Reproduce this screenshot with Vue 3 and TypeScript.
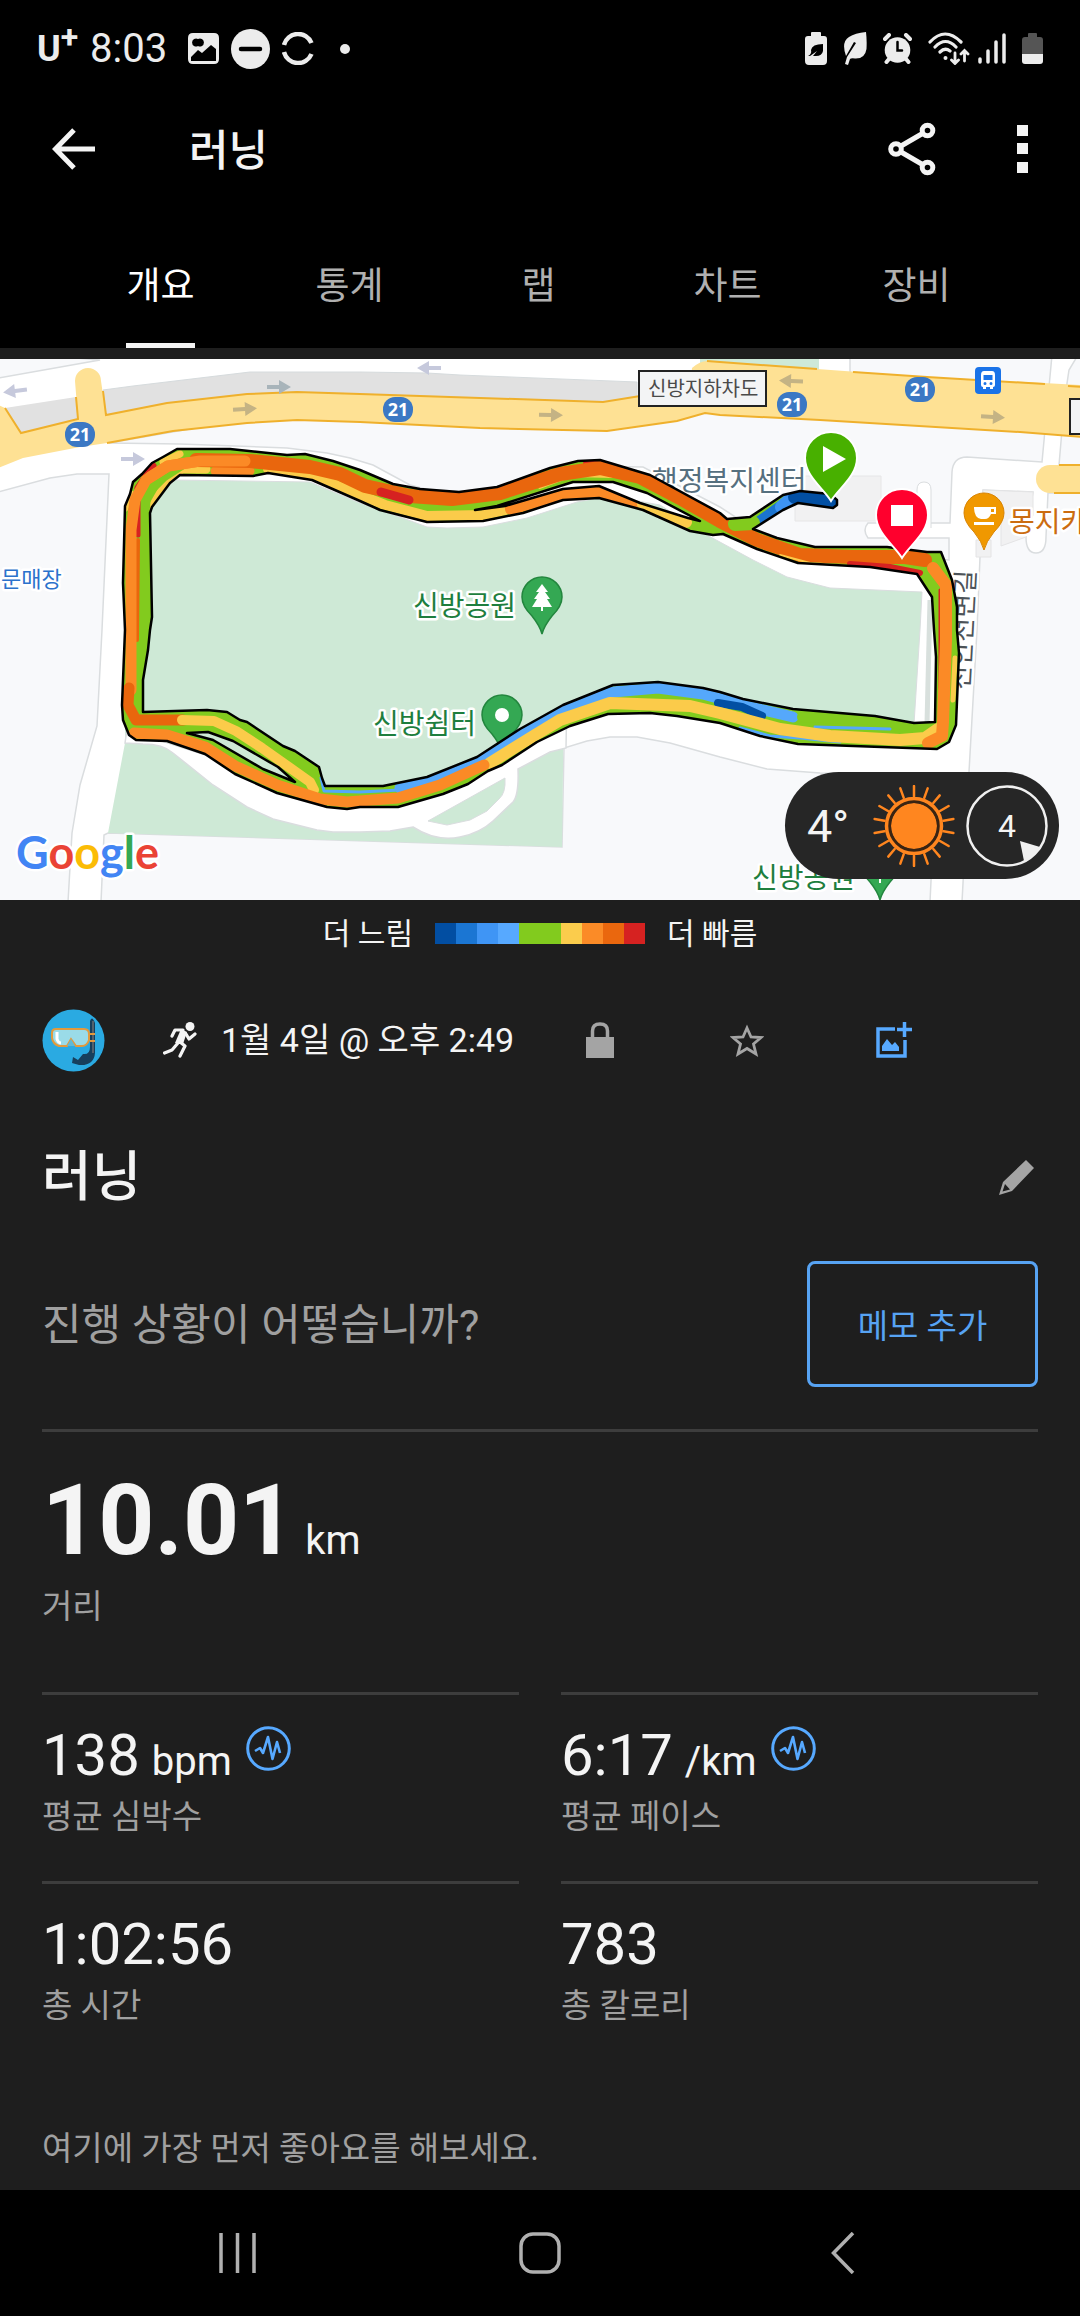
<script setup lang="ts">
import { ref } from 'vue'

interface Track {
  color: string
  width: number
  points: string
}

interface Arrow {
  x: number
  y: number
  angle: number
  color: string
}

interface Stat {
  value: string
  unit?: string
  label: string
  badge?: boolean
}

const tabs: string[] = ['개요', '통계', '랩', '차트', '장비']
const activeTab = ref(0)

const paceColors: string[] = [
  '#024ea2', '#1b76d3', '#3f95f5', '#57a9ff', '#82cb1e',
  '#82cb1e', '#fbcc4c', '#fb8b27', '#ea670e', '#d62221',
]

const green = '#82cb1e'
const yellow = '#fbcb4a'
const orange = '#fb8a26'
const deepOrange = '#e9660d'
const red = '#d62221'
const sky = '#55a8fb'
const navy = '#024fa3'

const routeShape =
  'M125 506L130 494L133 482L142 474L152 463L163 457L177 449H230L287 455L305 454L333 461L360 470L393 484L420 489L459 492L497 487L550 468L578 461L600 460L650 475L720 513L727 519L750 517L783 495L800 491L830 494L837 500L837 505L833 508L798 503L783 510L753 529L777 538L815 547H887L927 552H941L952 580L957 607V630L959 653L956 725L949 742L937 749L798 744L760 736L720 723L677 716L650 713L608 714L570 726L537 742L502 765L488 771L468 784L443 794L398 807H360L347 809L327 807L277 793L235 774L205 754L167 741L136 740L129 735L123 720L122 705L125 630L123 583Z' +
  'M150 513L152 507L170 483L180 475L253 476L268 473L312 480L360 501L380 510L427 522L483 521L523 513L563 500L599 498L643 510L690 531L713 535L723 534L757 549L798 563L870 567L917 574L932 597L934 630L936 657L935 722L914 723L875 716L793 709L743 699L720 692L703 688L658 682L613 685L563 705L520 729L477 757L427 777L383 786L325 786L322 778L319 767L295 751L283 746L247 722L240 720L227 712L207 710L143 712V680L148 650L150 630L152 617Z' +
  'M475 510L497 506L557 487L573 482H613L647 493L700 521L688 518L640 503L599 486L563 489L505 506Z' +
  'M187 733L208 732L233 741L278 767L295 782L263 769L213 740Z'

const tracks: Track[] = [
  { color: yellow, width: 9, points: '151,510 168,480 182,469 206,469' },
  { color: orange, width: 9, points: '215,471 250,471' },
  { color: yellow, width: 10, points: '268,469 312,475 360,495 385,505 427,516 483,515 505,510' },
  { color: orange, width: 12, points: '511,509 563,494 599,492 636,502' },
  { color: yellow, width: 12, points: '643,504 686,522' },
  { color: green, width: 6, points: '182,467 165,478 148,495 146,520' },
  { color: red, width: 7, points: '138,488 153,466' },
  { color: red, width: 5, points: '141,485 138,500 138,535' },
  { color: yellow, width: 7, points: '163,462 180,454' },
  { color: yellow, width: 7, points: '125,508 131,494' },
  { color: deepOrange, width: 4, points: '138,540 137,640' },
  { color: orange, width: 11, points: '245,461 200,461 168,466 146,480 135,500 131,530 131,690' },
  { color: yellow, width: 4, points: '540,487 572,475 612,476' },
  { color: red, width: 4, points: '585,463 603,463 650,478 715,515' },
  { color: deepOrange, width: 14, points: '196,460 250,461 310,467 340,474 365,486 410,496 452,499 500,493 560,474 600,468 640,477 680,498 720,521 757,540 800,555 853,557 905,557 925,560' },
  { color: orange, width: 11, points: '245,461 200,461 168,466 150,477' },
  { color: red, width: 9, points: '381,492 409,500' },
  { color: red, width: 6, points: '850,564 890,567 920,573' },
  { color: yellow, width: 2, points: '780,555 810,563 850,566' },
  { color: red, width: 3, points: '940,590 940,688' },
  { color: yellow, width: 5, points: '955,658 953,700' },
  { color: sky, width: 3, points: '321,778 324,791 360,792 400,790' },
  { color: sky, width: 11, points: '400,788 440,778 480,759 520,735 563,711 613,692 658,688 703,694 743,705 793,717' },
  { color: sky, width: 3, points: '740,728 770,736 800,738 840,742' },
  { color: navy, width: 8, points: '718,703 742,707 762,716' },
  { color: green, width: 10, points: '802,717 870,720 925,728' },
  { color: sky, width: 3, points: '815,727 890,729' },
  { color: yellow, width: 12, points: '490,763 535,735 560,720 610,703 690,706 720,713 780,729 830,736 900,740 925,738 938,729' },
  { color: orange, width: 12, points: '928,743 942,736 943,722 946,640 946,585 933,568' },
  { color: deepOrange, width: 11, points: '129,688 128,705 136,720 183,720' },
  { color: yellow, width: 10, points: '182,720 214,721 236,731 262,748 310,782 314,790' },
  { color: orange, width: 11, points: '134,733 167,735 205,747 235,766 277,785 320,799 347,802 398,798 440,785 484,765' },
  { color: '#1b74d0', width: 14, points: '760,523 785,505' },
  { color: '#3d93f4', width: 14, points: '782,507 790,500' },
  { color: navy, width: 14, points: '795,497 803,497 834,501' },
  { color: green, width: 14, points: '735,524 753,523' },
]

const arrows: Arrow[] = [
  { x: 15, y: 391, angle: 173, color: '#c6c9dc' },
  { x: 133, y: 459, angle: 0, color: '#c6c9dc' },
  { x: 279, y: 387, angle: 0, color: '#a8b4ba' },
  { x: 245, y: 409, angle: -3, color: '#c4b384' },
  { x: 429, y: 368, angle: 180, color: '#c6c9dc' },
  { x: 551, y: 415, angle: 1, color: '#c4b384' },
  { x: 791, y: 381, angle: 182, color: '#c4b384' },
  { x: 993, y: 417, angle: 3, color: '#c4b384' },
]

const shields: { x: number; y: number }[] = [
  { x: 80, y: 434 },
  { x: 398, y: 409 },
  { x: 792, y: 404 },
  { x: 920, y: 389 },
]

const rays: number[] = Array.from({ length: 18 }, (_, i) => i * 20)

const stats: Stat[] = [
  { value: '138', unit: 'bpm', label: '평균 심박수', badge: true },
  { value: '6:17', unit: '/km', label: '평균 페이스', badge: true },
  { value: '1:02:56', label: '총 시간' },
  { value: '783', label: '총 칼로리' },
]
</script>

<template>
  <div class="screen">
    <header class="top">
      <div class="status">
        <span class="carrier">U<span class="plus">+</span></span>
        <span class="clock">8:03</span>
        <div class="notices">
          <svg width="31" height="32" viewBox="0 0 31 32">
            <path fill="#ececec" fill-rule="evenodd" d="M5 0H26Q31 0 31 5V26Q31 31 26 31H5Q0 31 0 26V5Q0 0 5 0ZM3 24V28H28V16L23 12L14 20L10 17ZM10 6A4 4 0 1 0 10 13A4 4 0 1 0 10 6Z" />
          </svg>
          <svg width="39" height="40" viewBox="0 0 39 40">
            <ellipse cx="19.5" cy="20" rx="19.5" ry="20" fill="#ececec" />
            <path d="M10 20H29" stroke="#000" stroke-width="4.5" stroke-linecap="round" />
          </svg>
          <svg width="32" height="33" viewBox="0 0 32 33" fill="none" stroke="#ececec" stroke-width="4.5">
            <path d="M2 13A14.5 14.5 0 0 1 29.500 11M2 20A14.500 14.500 0 0 0 29.500 22" />
          </svg>
          <svg class="dot" width="10" height="10" viewBox="0 0 10 10"><circle cx="5" cy="5" r="5" fill="#ececec" /></svg>
        </div>
        <div class="signals">
          <svg width="22" height="33" viewBox="0 0 22 33">
            <path fill="#ececec" d="M7 0H15Q16 0 16 1V4H19Q22 4 22 7V29Q22 33 18 33H4Q0 33 0 29V7Q0 4 3 4H6V1Q6 0 7 0Z" />
            <path fill="#000" d="M18 12V19Q17 24 11 24H8L12 19L5 24H3Q7 22 6 18Q7 12 18 12Z" />
          </svg>
          <svg width="24" height="33" viewBox="0 0 24 33">
            <path fill="#ececec" d="M23 0Q24 8 23.500 17Q22 27 12 26.500Q8 26 7 27L5 33L2 32L4 25L13 11L11 10L3 24Q-2 10 6 5Q12 1 23 0Z" />
          </svg>
          <svg width="29" height="31" viewBox="0 0 29 31">
            <circle cx="14.500" cy="17" r="12.800" fill="#ececec" />
            <path d="M2 6L6 2M27 6L23 2M6 26L3.500 29M23 26L25.500 29" stroke="#ececec" stroke-width="4" stroke-linecap="round" />
            <path d="M14.500 9V17.500H19" fill="none" stroke="#000" stroke-width="2.500" stroke-linecap="round" />
          </svg>
          <svg class="wifi" width="42" height="33" viewBox="0 0 42 33" fill="none" stroke="#ececec" stroke-width="3.200" stroke-linecap="round">
            <path d="M2 10Q17 -6 33 10M7 15Q17.500 4 28 15M12 20Q17 15 22 19" />
            <circle cx="17.500" cy="26" r="2" fill="#ececec" stroke="none" />
            <path d="M27 21V31M23.500 28L27 31.500L30.500 28M36.500 29V19M33 22L36.500 18.500L40 22" stroke-width="2.800" />
          </svg>
          <svg width="28" height="31" viewBox="0 0 28 31" stroke="#ececec" stroke-width="3.500" stroke-linecap="round">
            <path d="M2 26V29M10 18V29M18 9V29M26 2V29" />
          </svg>
          <svg width="21" height="31" viewBox="0 0 21 31">
            <path fill="#555" d="M6 1Q6 0 7 0H14Q15 0 15 1V4H18Q21 4 21 7V21H0V7Q0 4 3 4H6Z" />
            <path fill="#ececec" d="M0 21H21V28Q21 31 18 31H3Q0 31 0 28Z" />
          </svg>
        </div>
      </div>

      <div class="appbar">
        <button class="icon-btn" aria-label="뒤로">
          <svg width="43" height="42" viewBox="0 0 43 42" fill="none" stroke="#f4f4f4" stroke-width="5">
            <path d="M22 2L3.500 21L22 40M4 21H43" />
          </svg>
        </button>
        <h1 class="title">러닝</h1>
        <button class="icon-btn" aria-label="공유">
          <svg width="48" height="54" viewBox="0 0 48 54" fill="none" stroke="#f4f4f4" stroke-width="5">
            <circle cx="8" cy="27" r="5.300" /><circle cx="39.500" cy="8.500" r="5.300" /><circle cx="39.500" cy="45.500" r="5.300" />
            <path d="M13 24L34.500 11.500M13 30L34.500 42.500" />
          </svg>
        </button>
        <button class="icon-btn" aria-label="더보기">
          <svg width="11" height="48" viewBox="0 0 11 48" fill="#f4f4f4">
            <path d="M0 0H11V11H0ZM0 18H11V29H0ZM0 37H11V48H0Z" />
          </svg>
        </button>
      </div>

      <nav class="tabs">
        <button v-for="(tab, i) in tabs" :key="tab" class="tab" :class="{ active: i === activeTab }" @click="activeTab = i">
          <span>{{ tab }}</span>
        </button>
      </nav>
    </header>

    <main class="content">
      <section class="map">
        <svg class="canvas" viewBox="0 359 1080 541">
          <defs>
            <clipPath id="route-clip"><path :d="routeShape" clip-rule="evenodd" /></clipPath>
            <g id="poi">
              <path d="M0 37Q-2 29 -10 19Q-20 9 -20 0A20 20 0 1 1 20 0Q20 9 10 19Q2 29 0 37Z" />
            </g>
            <path id="marker" d="M0 43C-8 30 -26 18 -26 0A26 26 0 1 1 26 0C26 18 8 30 0 43Z" />
          </defs>
          <rect y="359" width="1080" height="541" fill="#fff" />

          <g fill="#f8f9fb" stroke="#dadddf" stroke-width="1.500">
            <path d="M-2 492L50 478L77 474H109L102 630L97 726L80 785L72 833L68 902H-2Z" />
            <path d="M-2 378L100 360L40 355H-2Z" />
            <path d="M109 443L180 444L287 448L327 453L350 458L373 465L410 485L460 498L520 488L580 466L643 467L720 507L740 520L780 545L949 560V538H868Q862 530 868 523H950L952 472Q953 457 967 457L1042 462L1045 430L600 400L300 410Z" />
            <path d="M1062 430L1082 433V466L1059 465Z" />
            <path d="M983 490L1033 492L1026 537Q1026 553 1036 553Q1046 553 1046 537L1048 493H1082V902H962L969 772L977 630L980 557Z" />
            <path d="M101 902L104 835L108 833L562 847L564 748L587 741L610 737H637L670 743L720 757L767 769L820 773L936 776L930 902Z" />
            <path d="M850 355V375L1049 387L1052 355Z" />
            <path d="M1066 390L1069 370L1078 355H1082V390Z" />
          </g>
          <path d="M700 355H819V372L700 365Z" fill="#cee9d8" />
          <path d="M794 476H881V521H795V503L806 490Z" fill="#f1f1f2" stroke="#e6e6e7" />
          <path d="M983 490L1033 492V515L1026 537L1001 546V517H983ZM976 540H991V557H976Z" fill="#f1f1f2" stroke="#e4e4e5" />
          <path d="M917 528V490Q917 482 924 482Q931 482 931 490V528" fill="#fff" stroke="#dadddf" />

          <path d="M125 743L108 833L562 847L564 690H125Z" fill="#cee9d6" />
          <path d="M125 743L143 744Q163 744 173 753L213 785L247 807L273 819L317 830L333 832H360L390 831L413 827Q436 842 460 837Q480 833 493 821L513 802Q519 795 518 769L550 752L566 748L567 690L240 690L130 710Z" fill="#fff" stroke="#dadddf" stroke-width="1.500" />
          <path d="M428 821L505 778Q506 793 499 799L487 811L470 820L447 825Z" fill="#cee9d6" stroke="#dadddf" />
          <path d="M142 735V507L175 480L310 482L360 503L400 517L427 527L447 528L483 527L527 518L577 502L610 496L660 505L707 535L753 560L787 577L830 588L922 592L920 630L914 724L800 716L657 690L520 736L420 785L330 795Z" fill="#cee9d6" stroke="#dadddf" />
          <path d="M930 600L927 724" stroke="#d8e0dd" stroke-width="5" />

          <path d="M5 408L21 433L78 419L76 397Z" fill="#e1e1e1" />
          <path d="M103 390L133 386L250 372H360L427 373L460 375L637 382V397L603 402L360 394L297 392L247 394L167 403L106 415Z" fill="#e1e1e1" stroke="#d6dbdd" />
          <path d="M-2 405L5 408L21 433L78 419L75 381A13 13 0 0 1 101 381L106 415L167 403L247 394L297 392L360 394L603 402L690 388L692 368Q700 361 707 361L720 362L817 369L927 377L1082 385V437L1020 432L820 420L720 415L705 413L677 421L607 431L480 428L360 422L297 420L247 423L173 431L107 443L80 447L23 458L-2 468Z" fill="#fee194" />
          <g fill="none" stroke="#efb02c" stroke-width="2">
            <path d="M5 408L21 433L78 419L76 397M103 391L106 415L167 403L247 394L297 392L360 394L603 402L690 388" />
            <path d="M707 361L720 362L817 369M853 372L927 377L1045 384M1068 386L1082 387" />
            <path d="M107 443L173 431L247 423L297 420L360 422L480 428L607 431L677 421L705 413L720 415L820 420L1020 432L1082 437" />
          </g>
          <path d="M1082 465H1050A14 14 0 0 0 1050 493H1082Z" fill="#fee194" />
          <path d="M1059 465H1082M1054 493H1082" stroke="#efb02c" stroke-width="2" />

          <path v-for="a in arrows" :key="a.x" :transform="`translate(${a.x} ${a.y}) rotate(${a.angle})`" d="M-12 -2H0V-7L12 0L0 7V2H-12Z" :fill="a.color" />
          <g v-for="s in shields" :key="s.x">
            <rect :x="s.x - 15" :y="s.y - 12" width="30" height="25" rx="12" fill="#3b78c4" />
            <text class="shield" :x="s.x" :y="s.y + 7">21</text>
          </g>
          <rect x="639" y="371" width="127" height="35" fill="#f3f4f5" stroke="#222" stroke-width="2" />
          <text x="648" y="396" class="road">신방지하차도</text>
          <rect x="1070" y="399" width="20" height="35" fill="#f3f4f5" stroke="#222" stroke-width="2" />
          <rect x="975" y="367" width="26" height="27" rx="4" fill="#1a73e8" />
          <path fill="#fff" fill-rule="evenodd" d="M984 371H992Q995 371 995 375V385Q995 387 993 387V389H990V387H986V389H983V387Q981 387 981 385V375Q981 371 984 371ZM983.500 375V380H992.500V375ZM985 382A1 1 0 1 0 985 385A1 1 0 1 0 985 382ZM991 382A1 1 0 1 0 991 385A1 1 0 1 0 991 382Z" />

          <text x="1" y="587" class="poi-s" fill="#2b72cc">문매장</text>
          <text x="652" y="491" class="poi-l" fill="#56707f">행정복지센터</text>
          <text x="1009" y="532" class="poi-l" fill="#cb6c10">몽지카</text>
          <text class="street" transform="translate(969 690) rotate(-87)">천안천변길</text>
          <text x="413" y="616" class="poi-l" fill="#1e7e3e">신방공원</text>
          <text x="373" y="734" class="poi-l" fill="#1e7e3e">신방쉼터</text>
          <text x="752" y="888" class="poi-l" fill="#1e7e3e">신방공원</text>

          <g fill="#34a853" stroke="#23863e" stroke-width="1.500">
            <use href="#poi" x="542" y="597" />
            <use href="#poi" x="502" y="715" />
            <use href="#poi" x="880" y="863" />
          </g>
          <use href="#poi" x="984" y="513" fill="#f09800" stroke="#d98300" />
          <path d="M542 584L548 592H545L550 599H547L552 607H543V611H541V607H532L537 599H534L539 592H536Z" fill="#fff" />
          <path d="M879 875H881V883H879Z" fill="#fff" />
          <circle cx="502" cy="715" r="7" fill="#fff" />
          <path d="M974 507H996V514H991Q989 519 985 519H981Q974 518 974 507ZM991 509V512H994V509ZM974 522H994V525H974Z" fill="#fff" fill-rule="evenodd" />

          <path :d="routeShape" :fill="green" fill-rule="evenodd" />
          <g clip-path="url(#route-clip)" fill="none" stroke-linecap="round" stroke-linejoin="round">
            <polyline v-for="t in tracks" :key="t.points" :points="t.points" :stroke="t.color" :stroke-width="t.width" />
          </g>
          <path :d="routeShape" fill="none" stroke="#000" stroke-width="2.500" stroke-linejoin="round" />

          <g stroke="#fff" stroke-width="2">
            <use href="#marker" x="831" y="458" fill="#48b000" />
            <use href="#marker" x="902" y="515" fill="#ff002d" />
          </g>
          <path d="M823 446L846 459L823 472ZM891 505H913V526H891Z" fill="#fff" />

          <text x="16" y="869" class="brand">
            <tspan fill="#4285f4">G</tspan><tspan fill="#ea4335">o</tspan><tspan fill="#fbbc05">o</tspan><tspan fill="#4285f4">g</tspan><tspan fill="#34a853">l</tspan><tspan fill="#ea4335">e</tspan>
          </text>
        </svg>

        <div class="weather">
          <span class="temp">4°</span>
          <svg width="82" height="82" viewBox="-41 -41 82 82">
            <circle r="23" fill="#ff861f" />
            <circle r="24.500" fill="none" stroke="#3a2412" stroke-width="3" />
            <circle r="27.500" fill="none" stroke="#ff861f" stroke-width="3.500" />
            <path v-for="r in rays" :key="r" d="M0 -30V-40" :transform="`rotate(${r})`" stroke="#ff861f" stroke-width="2.500" stroke-linecap="round" />
          </svg>
          <div class="wind">
            <svg width="82" height="82" viewBox="-41 -41 82 82">
              <circle r="39.500" fill="none" stroke="#f0f0f0" stroke-width="2.500" />
              <path d="M13 15L33 21Q26 32 17 35Z" fill="#f0f0f0" />
            </svg>
            <span>4</span>
          </div>
        </div>
      </section>

      <section class="legend">
        <span>더 느림</span>
        <div class="scale"><i v-for="(c, i) in paceColors" :key="i" :style="{ background: c }"></i></div>
        <span>더 빠름</span>
      </section>

      <section class="meta">
        <div class="when">
          <svg width="63" height="63" viewBox="0 0 63 63">
            <circle cx="31.500" cy="31.500" r="31" fill="#2aaae2" />
            <path d="M48 12Q50 6 53 14V44Q52 57 37 56L30 54L31 48L36 51L41 45Q48 46 48 38Z" fill="#173f5c" />
            <path d="M51 12V44" stroke="#53616c" stroke-width="2" />
            <path d="M14 20H42Q47 20 47 25V31Q45 37 40 37H34L29 30L25 37H17Q11 35 10 29V24Q10 20 14 20Z" fill="#9adbe8" stroke="#e29a3d" stroke-width="2" />
            <path d="M29 30L25 37H33Z" fill="#5fb9d6" />
            <path d="M15 23V30Q16 34 19 34" fill="none" stroke="#fff" stroke-width="3" />
            <path d="M48 25H53M48 32H53" stroke="#e29a3d" stroke-width="2" />
          </svg>
          <svg class="runner" width="34" height="36" viewBox="0 0 34 36">
            <circle cx="27" cy="4.500" r="4.500" fill="#f4f4f4" />
            <path fill="none" stroke="#f4f4f4" stroke-width="3.200" stroke-linecap="round" stroke-linejoin="round" d="M9 14L12 8L20 8M23 12L26 17L32 12M15 21L9 28L1.500 31M17 20L22 24L17 34" />
            <path fill="#f4f4f4" d="M18 7L24 10L20 22L12 21Z" />
          </svg>
          <span>1월 4일 @ 오후 2:49</span>
        </div>
        <button class="meta-btn" aria-label="비공개">
          <svg width="28" height="36" viewBox="0 0 28 36">
            <path d="M0 15H28V36H0Z" fill="#a4a4a4" />
            <path d="M6.500 16V9Q6.500 2 14 2Q21.500 2 21.500 9V16" fill="none" stroke="#a4a4a4" stroke-width="3.500" />
          </svg>
        </button>
        <button class="meta-btn" aria-label="즐겨찾기">
          <svg width="34" height="33" viewBox="0 0 34 33" fill="none" stroke="#a4a4a4" stroke-width="2.800">
            <path d="M17 4L21 13L31 13.500L23.500 20L26 30L17 24.500L8 30L10.500 20L3 13.500L13 13Z" />
          </svg>
        </button>
        <button class="meta-btn" aria-label="사진 추가">
          <svg width="37" height="36" viewBox="0 0 37 36" fill="none" stroke="#57a9ff" stroke-width="3.500">
            <path d="M20 7H3V34H30V18M29.500 0V15M22 7.500H37" />
            <path d="M7 29V24L12 17L17 23L20 20L24 25V29Z" fill="#57a9ff" stroke="none" />
          </svg>
        </button>
      </section>

      <section class="name">
        <h2>러닝</h2>
        <button class="icon-btn" aria-label="이름 편집">
          <svg width="35" height="35" viewBox="0 0 35 35">
            <path d="M27 0L35 8L13 31L0 35L4 22ZM6 24L3.500 31.500L11 29.500Z" fill="#a4a4a4" fill-rule="evenodd" />
          </svg>
        </button>
      </section>

      <section class="memo">
        <p>진행 상황이 어떻습니까?</p>
        <button>메모 추가</button>
      </section>

      <section class="distance">
        <p class="big"><strong>10.01</strong> <span>km</span></p>
        <p class="label">거리</p>
      </section>

      <section class="stats">
        <div v-for="s in stats" :key="s.label" class="stat">
          <div class="figure">
            <p><b>{{ s.value }}</b><span v-if="s.unit">{{ s.unit }}</span></p>
            <svg v-if="s.badge" width="45" height="45" viewBox="0 0 45 45" fill="none" stroke="#57a9ff">
              <circle cx="22.500" cy="22.500" r="20.800" stroke-width="3" />
              <path d="M9 25L14 22L17 27L22 11L26.500 33L31 16L34 27" stroke-width="2.600" stroke-linejoin="round" />
            </svg>
          </div>
          <p class="label">{{ s.label }}</p>
        </div>
      </section>

      <p class="likes">여기에 가장 먼저 좋아요를 해보세요.</p>
    </main>

    <footer class="system-nav">
      <button aria-label="최근 앱">
        <svg width="37" height="42" viewBox="0 0 37 42" stroke="#b0b0b0" stroke-width="3.500"><path d="M2 1V41M18.500 1V41M35 1V41" /></svg>
      </button>
      <button aria-label="홈">
        <svg width="42" height="42" viewBox="0 0 42 42"><rect x="2" y="2" width="38" height="38" rx="12" fill="none" stroke="#b0b0b0" stroke-width="3.500" /></svg>
      </button>
      <button aria-label="뒤로 가기">
        <svg width="24" height="42" viewBox="0 0 24 42"><path d="M22 1L2.500 21L22 41" fill="none" stroke="#b0b0b0" stroke-width="3.500" /></svg>
      </button>
    </footer>
  </div>
</template>

<style>
body {
  margin: 0;
  background: #1e1e1e;
}
</style>

<style scoped>
.screen {
  display: flex;
  flex-direction: column;
  min-height: 100vh;
  color: #f4f4f4;
  background: #1e1e1e;
  font-family: Roboto, "Noto Sans CJK KR", sans-serif;
}

svg {
  display: block;
  flex: none;
}

p,
h1,
h2 {
  margin: 0;
}

button {
  padding: 0;
  border: 0;
  background: none;
  color: inherit;
  font: inherit;
}

.top {
  background: #000;
}

.status {
  display: flex;
  align-items: center;
  height: 97px;
  padding: 0 37px;
  color: #ececec;
}

.carrier {
  display: flex;
  width: 53px;
  font-size: 36px;
  font-weight: 700;
  line-height: 40px;
}

.plus {
  margin-top: -12px;
  font-size: 32px;
}

.clock {
  width: 98px;
  font-size: 40px;
  line-height: 48px;
}

.notices {
  display: flex;
  flex: 1;
  align-items: center;
  gap: 12px;
}

.dot {
  margin-left: 14px;
}

.signals {
  display: flex;
  align-items: center;
  gap: 16px;
}

.wifi {
  margin-right: -8px;
}

.appbar {
  display: flex;
  align-items: center;
  height: 103px;
  padding: 0 52px;
}

.icon-btn {
  display: flex;
  align-items: center;
  justify-content: center;
}

.title {
  flex: 1;
  margin-left: 94px;
  padding-top: 4px;
  font-size: 43px;
  font-weight: 500;
  line-height: 48px;
}

.appbar .icon-btn + .icon-btn {
  margin-left: 81px;
}

.tabs {
  display: flex;
  justify-content: space-around;
  height: 148px;
  padding: 0 69px 0 66px;
}

.tab {
  display: flex;
  flex: 1;
  justify-content: center;
  color: #b0b0b0;
  font-size: 37px;
  line-height: 48px;
}

.tab span {
  box-sizing: border-box;
  height: 148px;
  padding-top: 63px;
  border-bottom: 5px solid transparent;
}

.tab.active {
  color: #fff;
}

.tab.active span {
  border-color: #f4f4f4;
}

.content {
  flex: 1;
  padding-top: 11px;
}

.map {
  position: relative;
}

.canvas {
  width: 100%;
  height: auto;
}

.canvas text {
  font-family: "Noto Sans CJK KR", sans-serif;
}

.canvas .shield {
  fill: #fff;
  font-family: "Noto Sans", sans-serif;
  font-size: 18px;
  font-weight: 700;
  text-anchor: middle;
}

.road {
  fill: #4a4a4a;
  font-size: 20px;
}

.poi-s,
.poi-l,
.street,
.brand {
  paint-order: stroke;
  stroke: #fff;
  stroke-width: 5px;
  stroke-linejoin: round;
}

.poi-s {
  font-size: 22px;
}

.poi-l {
  font-size: 28px;
}

.street {
  fill: #4d5358;
  font-size: 26px;
}

.canvas .brand {
  font-family: Lato, sans-serif;
  font-size: 45px;
  font-weight: 700;
}

.weather {
  position: absolute;
  right: 21px;
  bottom: 21px;
  display: flex;
  align-items: center;
  box-sizing: border-box;
  height: 107px;
  padding: 0 11px 0 22px;
  border-radius: 54px;
  background: #262626;
}

.temp {
  width: 66px;
  padding-top: 2px;
  font-size: 45px;
  line-height: 54px;
}

.wind {
  display: grid;
  place-items: center;
  margin-left: 11px;
  font-size: 32px;
  line-height: 40px;
}

.wind > * {
  grid-area: 1 / 1;
}

.legend {
  display: flex;
  align-items: center;
  justify-content: center;
  gap: 22px;
  height: 66px;
  font-size: 30px;
  line-height: 36px;
}

.legend span {
  padding-top: 2px;
}

.scale {
  display: flex;
}

.scale i {
  width: 21px;
  height: 21px;
}

.meta {
  display: flex;
  align-items: center;
  height: 148px;
  padding: 0 113px 0 42px;
  font-size: 34px;
  line-height: 48px;
}

.when {
  display: flex;
  flex: 1;
  align-items: center;
}

.runner {
  margin: 0 24px 0 58px;
}

.meta-btn {
  display: flex;
  flex: 0 0 147px;
  justify-content: center;
}

.name {
  display: flex;
  align-items: center;
  justify-content: space-between;
  height: 126px;
  padding: 0 46px 0 42px;
}

.name h2 {
  padding-top: 2px;
  font-size: 54px;
  font-weight: 500;
  line-height: 60px;
}

.memo {
  display: flex;
  align-items: center;
  justify-content: space-between;
  margin: 21px 42px 0;
  padding-bottom: 42px;
  border-bottom: 3px solid #3d3d3d;
}

.memo p {
  padding-top: 2px;
  color: #a0a0a0;
  font-size: 43px;
  line-height: 60px;
}

.memo button {
  box-sizing: border-box;
  width: 231px;
  height: 126px;
  border: 3px solid #57a3f3;
  border-radius: 8px;
  color: #57a3f3;
  font-size: 33px;
}

.distance {
  height: 260px;
  padding: 0 42px;
}

.big {
  padding-top: 47px;
  font-size: 40px;
  line-height: 84px;
}

.big strong {
  font-size: 98px;
  font-weight: 700;
}

.label {
  color: #a0a0a0;
  font-size: 33px;
  line-height: 48px;
}

.stats {
  display: grid;
  grid-template-columns: 1fr 1fr;
  column-gap: 42px;
  padding: 0 42px;
}

.stat {
  box-sizing: border-box;
  height: 189px;
  padding-top: 24px;
  border-top: 3px solid #3d3d3d;
}

.figure {
  display: flex;
  gap: 14px;
  height: 74px;
}

.figure svg {
  margin-top: 7px;
}

.figure p {
  line-height: 72px;
}

.figure b {
  font-size: 58px;
  font-weight: 400;
}

.figure p span {
  margin-left: 12px;
  font-size: 40px;
}

.likes {
  padding: 55px 42px 17px;
  color: #a0a0a0;
  font-size: 33px;
  line-height: 48px;
}

.system-nav {
  display: flex;
  justify-content: center;
  height: 126px;
  background: #000;
}

.system-nav button {
  display: flex;
  flex: 0 1 303px;
  align-items: center;
  justify-content: center;
}
</style>
